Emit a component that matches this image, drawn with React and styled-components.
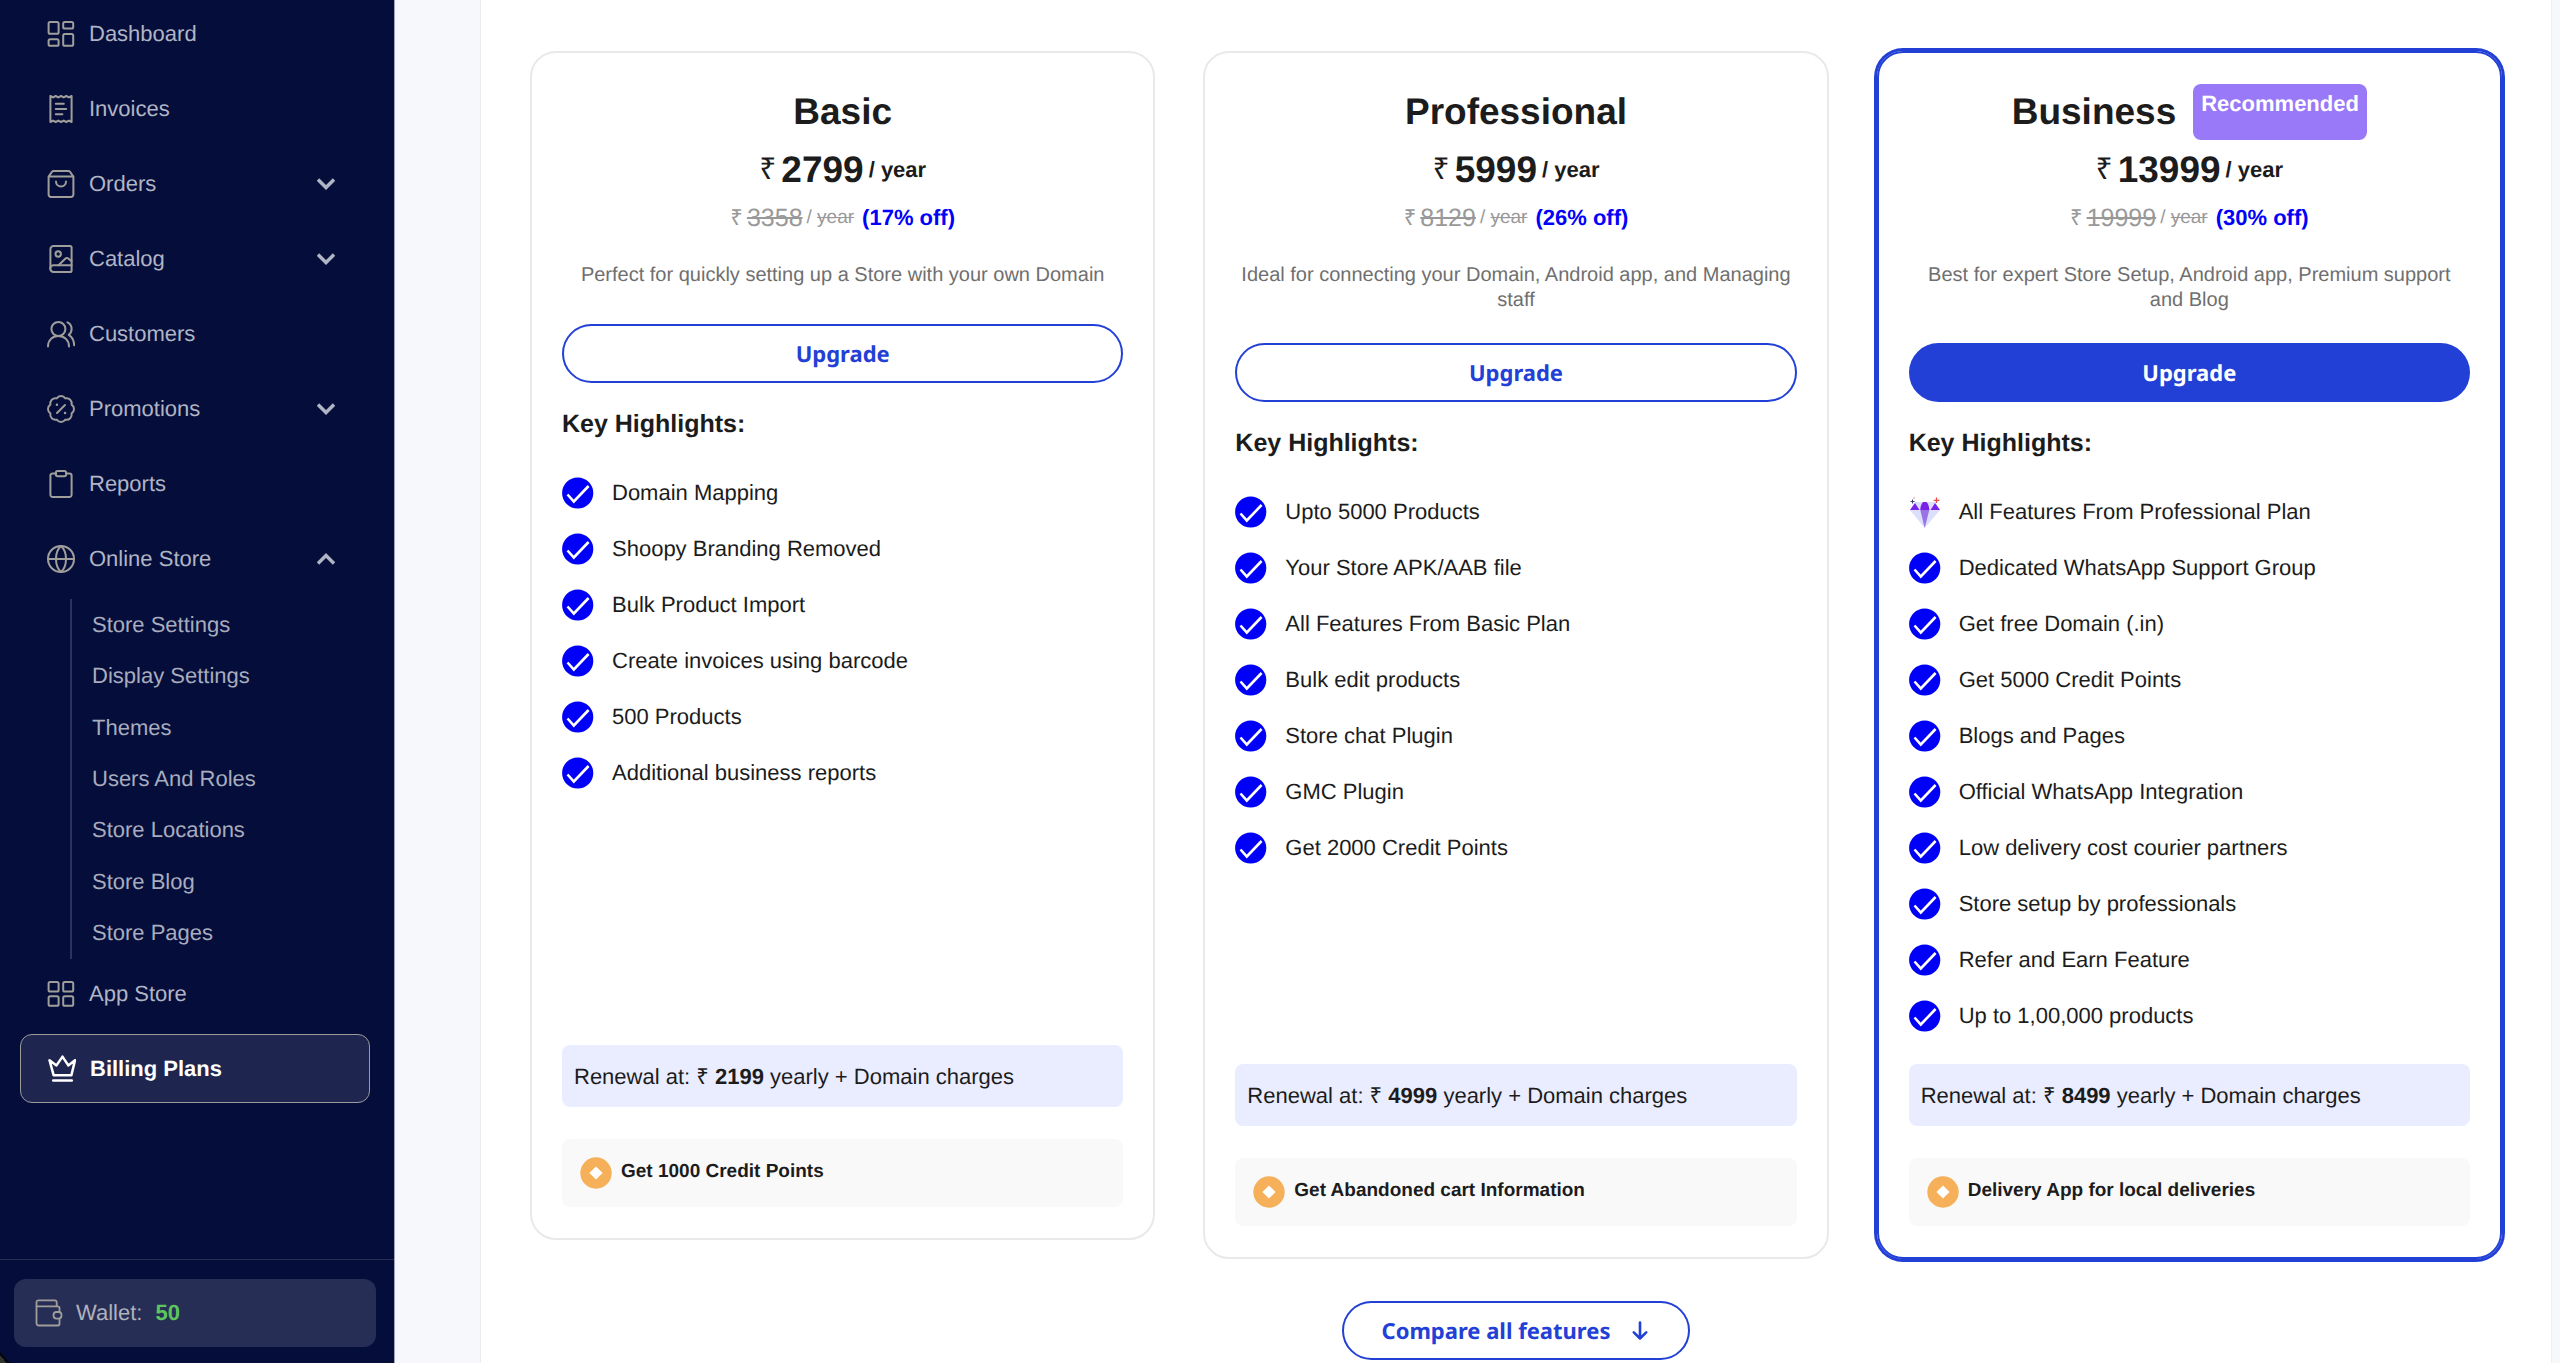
import React from "react";
import styled, { createGlobalStyle, css } from "styled-components";

const GlobalStyle = createGlobalStyle`
  *, *::before, *::after { box-sizing: border-box; }
  body {
    margin: 0;
    background: #f7f8fc;
    color: #1c1c1c;
    font-family: "Liberation Sans", Arial, sans-serif;
    font-size: 22px;
    text-rendering: geometricPrecision;
  }
  ul { list-style: none; margin: 0; padding: 0; }
  h2, h3, p { margin: 0; }
  a { color: inherit; text-decoration: none; }
  button { font: inherit; text-rendering: inherit; cursor: pointer; }
  svg { display: block; flex: none; }
`;

const Page = styled.div`
  display: flex;
  height: 100vh;
  overflow: hidden;
`;

/* ---------- Sidebar ---------- */

const Sidebar = styled.aside`
  flex: none;
  width: 395px;
  display: flex;
  flex-direction: column;
  border-right: 1px solid #9fa3bb;
  background: linear-gradient(48deg, #33352f 0 5px, #05060f 5px 7px, #050e3b 8px);
  color: #b0b4c4;
`;

const Nav = styled.nav`
  flex: 1;
  min-height: 0;
  margin-top: -1px;
`;

const NavItem = styled.li`
  margin-bottom: ${(p) => (p.$open ? 0 : 6)}px;
`;

const navRow = css`
  display: flex;
  align-items: center;
  gap: 14px;
  width: 350px;
  height: 69px;
  margin: 0 0 0 20px;
  padding: 0 35px 0 27px;
  border: 0;
  border-radius: 12px;
  background: none;
  color: inherit;
  font-size: 22px;
  text-align: left;
`;

const NavLink = styled.a`
  ${navRow}
  ${(p) =>
    p.$active &&
    css`
      border: 1px solid #9b9a9c;
      background: #1e264f;
      color: #fff;
      font-weight: 700;
    `}
`;

const NavButton = styled.button`
  ${navRow}
`;

const NavLabel = styled.span`
  flex: 1;
`;

const SubNav = styled.ul`
  display: grid;
  grid-auto-rows: 1fr;
  height: 360px;
  && { margin: 6px 24px 0 70px; padding-left: 20px; }
  border-left: 2px solid #2c345c;
`;

const SubLink = styled.a`
  display: flex;
  align-items: center;
  height: 100%;
  color: #a8acbe;
`;

const SidebarFooter = styled.div`
  padding: 19px 18px 16px 14px;
  border-top: 1px solid #272f55;
`;

const Wallet = styled.a`
  display: flex;
  align-items: center;
  gap: 13px;
  height: 68px;
  padding: 0 21px;
  border-radius: 12px;
  background: #272e55;
  color: #b0b2bd;
`;

const Balance = styled.strong`
  color: #5bc65d;
`;

/* ---------- Plans ---------- */

const Main = styled.main`
  flex: 1;
  min-width: 0;
  padding: 0 8px 0 85px;
`;

const Panel = styled.section`
  display: flex;
  flex-direction: column;
  align-items: center;
  min-height: 100%;
  padding: 51px 49px 0;
  border-left: 1px solid #ececf0;
  border-right: 1px solid #f0f0f4;
  background: #fff;
`;

const Plans = styled.div`
  display: grid;
  grid-template-columns: repeat(3, 1fr);
  align-items: start;
  gap: 48px;
  width: 100%;
`;

const Card = styled.article`
  padding: 31px 30px;
  border: 2px solid ${(p) => (p.$featured ? "#2340d6" : "#e9e9e9")};
  border-radius: 26px;
  box-shadow: ${(p) => (p.$featured ? "0 0 0 3px #2340d6" : "none")};
`;

const TitleRow = styled.div`
  display: flex;
  align-items: center;
  justify-content: center;
  gap: 17px;
  height: 56px;
`;

const PlanName = styled.h2`
  font-size: 37px;
  line-height: 56px;
`;

const Badge = styled.span`
  align-self: stretch;
  padding: 7px 8px;
  border-radius: 8px;
  background: #9a79f9;
  color: #fff;
  font-weight: 700;
  line-height: 26px;
`;

const PriceRow = styled.p`
  display: flex;
  align-items: center;
  justify-content: center;
  gap: 5px;
  && { margin-top: 8px; }
  font-weight: 700;
  line-height: 44px;
`;

const Rupee = styled.span`
  font-size: ${(p) => (p.$small ? 22 : 30)}px;
  font-weight: 400;
`;

const Amount = styled.span`
  font-size: 37px;
`;

const OldPriceRow = styled.p`
  display: flex;
  align-items: center;
  justify-content: center;
  gap: 4px;
  && { margin-top: 10px; }
  color: #999;
  line-height: 32px;
`;

const OldAmount = styled.s`
  font-size: 25px;
`;

const OldPeriod = styled.span`
  font-size: 19px;
`;

const Discount = styled.strong`
  margin-left: 4px;
  color: #0000fb;
`;

const Description = styled.p`
  min-height: 31px;
  && { margin-top: 29px; }
  color: #6f6f6f;
  font-size: 20px;
  line-height: 25px;
  text-align: center;
`;

const PillButton = styled.button`
  display: flex;
  align-items: center;
  justify-content: center;
  gap: 22px;
  height: 59px;
  border: 2px solid #2340d6;
  border-radius: 30px;
  background: ${(p) => (p.$filled ? "#2340d6" : "#fff")};
  color: ${(p) => (p.$filled ? "#fff" : "#2340d6")};
  font-family: "Noto Sans", sans-serif;
  font-size: 22px;
  font-weight: 700;
`;

const UpgradeButton = styled(PillButton)`
  width: 100%;
  margin-top: 30px;
`;

const CompareButton = styled(PillButton)`
  margin-top: 42px;
  padding: 0 40px 0 38px;
`;

const HighlightsTitle = styled.h3`
  && { margin-top: 25px; }
  font-size: 25px;
  line-height: 32px;
`;

const Features = styled.ul`
  min-height: 560px;
  && { margin-top: 25px; }
`;

const Feature = styled.li`
  display: flex;
  align-items: center;
  gap: 18px;
  height: 56px;
`;

const Renewal = styled.p`
  && { margin-top: 20px; }
  padding: 2px 12px 0;
  border-radius: 8px;
  background: #eaedff;
  line-height: 60px;
`;

const Bonus = styled.div`
  display: flex;
  align-items: center;
  gap: 9px;
  height: 68px;
  margin-top: 32px;
  padding: 0 18px;
  border-radius: 8px;
  background: #f9f9f9;
`;

const BonusText = styled.strong`
  padding-bottom: 3px;
  font-size: 19px;
`;

/* ---------- Icons ---------- */

const Icon = ({ children, size = 28, color = "#a09e9b", width = 2 }) => (
  <svg
    width={size}
    height={size}
    viewBox="0 0 28 28"
    fill="none"
    stroke={color}
    strokeWidth={width}
    strokeLinecap="round"
    strokeLinejoin="round"
    aria-hidden="true"
  >
    {children}
  </svg>
);

const DashboardIcon = () => (
  <Icon>
    <rect x="1.6" y="2" width="10" height="11.8" rx="1.6" />
    <rect x="16.2" y="2" width="10" height="6.6" rx="1.6" />
    <rect x="1.6" y="19.2" width="10" height="6.6" rx="1.6" />
    <rect x="16.2" y="14" width="10" height="11.8" rx="1.6" />
  </Icon>
);

const InvoiceIcon = () => (
  <Icon>
    <path d="M3.4 1v26l2.6-1.4L8.7 27l2.6-1.4L14 27l2.7-1.4 2.6 1.4 2.7-1.4 2.6 1.4V1L22 2.4 19.3 1l-2.6 1.4L14 1l-2.7 1.4L8.7 1 6 2.4z" />
    <path d="M8.8 8.8h8M8.8 14h10.4M8.8 19.3h6.6" />
  </Icon>
);

const OrdersIcon = () => (
  <Icon>
    <path d="M1.6 6.6V24.6a2.4 2.4 0 0 0 2.4 2.4h20a2.4 2.4 0 0 0 2.4-2.4V6.6L23.2 2a2.4 2.4 0 0 0-2-1H6.8a2.4 2.4 0 0 0-2 1zM1.6 6.6h24.8" />
    <path d="M9 11.4a5 5 0 0 0 10 0" />
  </Icon>
);

const CatalogIcon = () => (
  <Icon>
    <path d="M24.6 20.2V2.6a1.6 1.6 0 0 0-1.6-1.6H6.6a3.2 3.2 0 0 0-3.2 3.2v19.6" />
    <path d="M24.6 20.2H6.6a3.4 3.4 0 0 0 0 6.8H23a1.6 1.6 0 0 0 1.6-1.6z" />
    <circle cx="11.2" cy="9" r="2.7" />
    <path d="M11.5 20.2l7-6.7a2.2 2.2 0 0 1 2.8 0l3.3 2.8" />
  </Icon>
);

const CustomersIcon = () => (
  <Icon>
    <circle cx="11.4" cy="9" r="7" />
    <path d="M1 26.5C1 20.2 5.4 16 11.4 16s10.6 4.2 10.6 10.5" />
    <path d="M20.5 2.3c2.6 1.3 4.1 3.7 4.1 6.7 0 2.4-1 4.4-2.8 5.8 3.2 2.1 5.2 5.6 5.4 10.4" />
  </Icon>
);

const PromotionsIcon = () => (
  <Icon>
    <path
      transform="translate(-1.6 -1.6) scale(1.3)"
      strokeWidth="1.5"
      d="M3.85 8.62a4 4 0 0 1 4.78-4.77 4 4 0 0 1 6.74 0 4 4 0 0 1 4.78 4.78 4 4 0 0 1 0 6.74 4 4 0 0 1-4.77 4.78 4 4 0 0 1-6.75 0 4 4 0 0 1-4.78-4.77 4 4 0 0 1 0-6.76Z"
    />
    <path d="M10 18l8-8" />
    <path d="M9.9 9.7h.1M18 18h.1" strokeWidth="2.4" />
  </Icon>
);

const ReportsIcon = () => (
  <Icon>
    <path d="M9 3.4H5.6a2.2 2.2 0 0 0-2.2 2.2v19.2a2.2 2.2 0 0 0 2.2 2.2h16.8a2.2 2.2 0 0 0 2.2-2.2V5.6a2.2 2.2 0 0 0-2.2-2.2H19" />
    <rect x="8.8" y="1" width="10.4" height="5.2" rx="2" />
  </Icon>
);

const GlobeIcon = () => (
  <Icon>
    <circle cx="14" cy="14" r="13" />
    <path d="M1 14h26M14 1c-3.4 3-5 7.4-5 13s1.6 10 5 13c3.4-3 5-7.4 5-13s-1.6-10-5-13z" />
  </Icon>
);

const AppsIcon = () => (
  <Icon>
    <rect x="1.6" y="2" width="10" height="9.6" rx="1.6" />
    <rect x="16.2" y="2" width="10" height="9.6" rx="1.6" />
    <rect x="1.6" y="16.2" width="10" height="9.6" rx="1.6" />
    <rect x="16.2" y="16.2" width="10" height="9.6" rx="1.6" />
  </Icon>
);

const CrownIcon = () => (
  <Icon color="#fff" width={2.5}>
    <path d="M1.5 5.2L5.6 20.2h17.8L27 5.2l-6.7 5.2L14.5 1.6 8.5 10.4z" />
    <path d="M5.2 25.6h18.6" />
  </Icon>
);

const WalletIcon = () => (
  <Icon width={1.8}>
    <path d="M24.5 13V9a1.7 1.7 0 0 0-1.7-1.7H1.5v17a2.2 2.2 0 0 0 2.2 2.2h19.1a1.7 1.7 0 0 0 1.7-1.7v-4.3" />
    <path d="M1.5 7.3V3.4a2 2 0 0 1 2-2h16.200a2 2 0 0 1 2 2v3.900" />
    <rect x="18.5" y="13" width="8" height="6.6" rx="3" />
  </Icon>
);

const Chevron = ({ up }) => (
  <svg width="18" height="12" viewBox="0 0 18 12" fill="none" stroke="currentColor" strokeWidth="3.4" aria-hidden="true">
    <path d={up ? "M1 10.5l8-8 8 8" : "M1 1.5l8 8 8-8"} />
  </svg>
);

const CheckIcon = () => (
  <svg width="32" height="32" viewBox="0 0 32 32" aria-hidden="true">
    <circle cx="15.7" cy="16" r="15.6" fill="#0000f8" />
    <path d="M5.5 17.5l6.3 7L26.6 9" fill="none" stroke="#fff" strokeWidth="2.6" />
  </svg>
);

const DiamondIcon = () => (
  <svg width="32" height="32" viewBox="0 0 32 32" aria-hidden="true">
    <path d="M6 6h20l5 8-15.300 18L1 14z" fill="#dcdffb" />
    <path d="M11.3 14h9L15.7 32z" fill="#9a74e6" />
    <path d="M1 14l5-7 4.5 7zM11.300 14c0-4 1.500-7 3-8h3c1.500 1 3 4 3 8zM21.500 14L26 7l5 7z" fill="#7a22e8" />
    <path d="M3.5 3.500v4M1.500 5.500h4" stroke="#3b3f73" strokeWidth="1" />
    <path d="M5 1v2M4 2h2" stroke="#f6a3a3" strokeWidth="0.8" />
    <path d="M27.500 1.500v5.600M24.700 4.300h5.600" stroke="#ee4b4b" strokeWidth="1.3" />
  </svg>
);

const CoinIcon = () => (
  <svg width="32" height="32" viewBox="0 0 32 32" aria-hidden="true">
    <circle cx="16" cy="16" r="15.7" fill="#f5b059" />
    <path d="M16 9.4l6.6 6.6-6.6 6.6L9.4 16z" fill="#fff" />
  </svg>
);

const ArrowDown = () => (
  <svg width="16" height="20" viewBox="0 0 16 20" fill="none" stroke="currentColor" strokeWidth="2.6" strokeLinecap="round" strokeLinejoin="round" aria-hidden="true">
    <path d="M8 1.500v16M1.800 11.300l6.200 6.200 6.200-6.200" />
  </svg>
);

/* ---------- Data ---------- */

const navItems = [
  { label: "Dashboard", icon: DashboardIcon },
  { label: "Invoices", icon: InvoiceIcon },
  { label: "Orders", icon: OrdersIcon, expandable: true },
  { label: "Catalog", icon: CatalogIcon, expandable: true },
  { label: "Customers", icon: CustomersIcon },
  { label: "Promotions", icon: PromotionsIcon, expandable: true },
  { label: "Reports", icon: ReportsIcon },
  {
    label: "Online Store",
    icon: GlobeIcon,
    expandable: true,
    children: [
      "Store Settings",
      "Display Settings",
      "Themes",
      "Users And Roles",
      "Store Locations",
      "Store Blog",
      "Store Pages",
    ],
  },
  { label: "App Store", icon: AppsIcon },
  { label: "Billing Plans", icon: CrownIcon, active: true },
];

const plans = [
  {
    name: "Basic",
    price: "2799",
    oldPrice: "3358",
    discount: "17%",
    description: "Perfect for quickly setting up a Store with your own Domain",
    features: [
      "Domain Mapping",
      "Shoopy Branding Removed",
      "Bulk Product Import",
      "Create invoices using barcode",
      "500 Products",
      "Additional business reports",
    ],
    renewal: "2199",
    bonus: "Get 1000 Credit Points",
  },
  {
    name: "Professional",
    price: "5999",
    oldPrice: "8129",
    discount: "26%",
    description: "Ideal for connecting your Domain, Android app, and Managing staff",
    features: [
      "Upto 5000 Products",
      "Your Store APK/AAB file",
      "All Features From Basic Plan",
      "Bulk edit products",
      "Store chat Plugin",
      "GMC Plugin",
      "Get 2000 Credit Points",
    ],
    renewal: "4999",
    bonus: "Get Abandoned cart Information",
  },
  {
    name: "Business",
    featured: true,
    price: "13999",
    oldPrice: "19999",
    discount: "30%",
    description: "Best for expert Store Setup, Android app, Premium support and Blog",
    premium: "All Features From Professional Plan",
    features: [
      "Dedicated WhatsApp Support Group",
      "Get free Domain (.in)",
      "Get 5000 Credit Points",
      "Blogs and Pages",
      "Official WhatsApp Integration",
      "Low delivery cost courier partners",
      "Store setup by professionals",
      "Refer and Earn Feature",
      "Up to 1,00,000 products",
    ],
    renewal: "8499",
    bonus: "Delivery App for local deliveries",
  },
];

function NavEntry({ item }) {
  const { label, icon: Glyph, expandable, children, active } = item;
  return (
    <NavItem $open={Boolean(children)}>
      {expandable ? (
        <NavButton type="button" aria-expanded={Boolean(children)}>
          <Glyph />
          <NavLabel>{label}</NavLabel>
          <Chevron up={Boolean(children)} />
        </NavButton>
      ) : (
        <NavLink href="#" $active={active} aria-current={active ? "page" : undefined}>
          <Glyph />
          <NavLabel>{label}</NavLabel>
        </NavLink>
      )}
      {children && (
        <SubNav>
          {children.map((name) => (
            <li key={name}>
              <SubLink href="#">{name}</SubLink>
            </li>
          ))}
        </SubNav>
      )}
    </NavItem>
  );
}

function PlanCard({ plan }) {
  return (
    <Card $featured={plan.featured}>
      <TitleRow>
        <PlanName>{plan.name}</PlanName>
        {plan.featured && <Badge>Recommended</Badge>}
      </TitleRow>
      <PriceRow>
        <Rupee>₹</Rupee>
        <Amount>{plan.price}</Amount>
        <span>/ year</span>
      </PriceRow>
      <OldPriceRow>
        <Rupee $small>₹</Rupee>
        <OldAmount>{plan.oldPrice}</OldAmount>
        <OldPeriod>
          / <s>year</s>
        </OldPeriod>
        <Discount>({plan.discount} off)</Discount>
      </OldPriceRow>
      <Description>{plan.description}</Description>
      <UpgradeButton type="button" $filled={plan.featured}>
        Upgrade
      </UpgradeButton>
      <HighlightsTitle>Key Highlights:</HighlightsTitle>
      <Features>
        {plan.premium && (
          <Feature>
            <DiamondIcon />
            {plan.premium}
          </Feature>
        )}
        {plan.features.map((text) => (
          <Feature key={text}>
            <CheckIcon />
            {text}
          </Feature>
        ))}
      </Features>
      <Renewal>
        Renewal at: ₹ <strong>{plan.renewal}</strong> yearly + Domain charges
      </Renewal>
      <Bonus>
        <CoinIcon />
        <BonusText>{plan.bonus}</BonusText>
      </Bonus>
    </Card>
  );
}

export default function App() {
  return (
    <Page>
      <GlobalStyle />
      <Sidebar>
        <Nav>
          <ul>
            {navItems.map((item) => (
              <NavEntry key={item.label} item={item} />
            ))}
          </ul>
        </Nav>
        <SidebarFooter>
          <Wallet href="#">
            <WalletIcon />
            <span>Wallet:</span>
            <Balance>50</Balance>
          </Wallet>
        </SidebarFooter>
      </Sidebar>
      <Main>
        <Panel>
          <Plans>
            {plans.map((plan) => (
              <PlanCard key={plan.name} plan={plan} />
            ))}
          </Plans>
          <CompareButton type="button">
            Compare all features
            <ArrowDown />
          </CompareButton>
        </Panel>
      </Main>
    </Page>
  );
}
